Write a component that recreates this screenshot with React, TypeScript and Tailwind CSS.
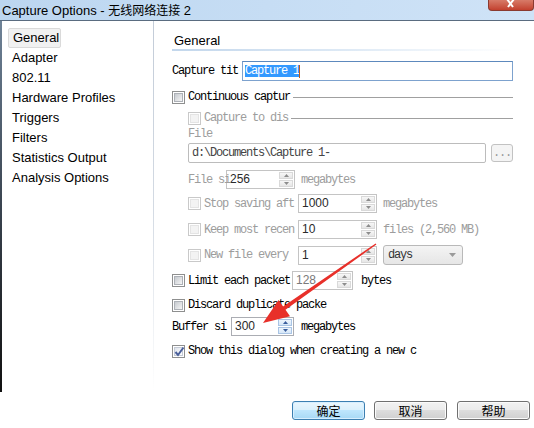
import React from 'react';

const MONO = "font-['Liberation_Mono',monospace] text-[12px] tracking-[-1.2px] leading-[12px] whitespace-nowrap";
const SANS = "font-['Liberation_Sans',Arial,sans-serif]";
const CJK = "font-['Noto_Sans_CJK_SC',sans-serif]";

const NAV = ['General', 'Adapter', '802.11', 'Hardware Profiles', 'Triggers', 'Filters', 'Statistics Output', 'Analysis Options'];

function CheckBox({ checked = false, disabled = false }: { checked?: boolean; disabled?: boolean }) {
  return (
    <div className={`w-[13px] h-[13px] shrink-0 border ${disabled ? 'border-[#c9c9c9]' : 'border-[#8e8f8f]'} bg-white p-[1px]`}>
      {checked ? (
        <div className="relative w-full h-full border border-[#c5cbd6] bg-gradient-to-br from-[#dfe4ec] to-white">
          <svg className="absolute -left-[1px] -top-[2px]" width="11" height="11" viewBox="0 0 11 11">
            <path d="M1.5 6 L4 9 L9.5 1.5" stroke="#4a5f9a" strokeWidth="2" fill="none" />
          </svg>
        </div>
      ) : (
        <div
          className={`w-full h-full border ${
            disabled ? 'border-[#e4e4e4] bg-[#f3f3f3]' : 'border-[#adb1b7] bg-gradient-to-br from-[#c6cacf] to-[#f5f5f5]'
          }`}
        />
      )}
    </div>
  );
}

function Tri({ up, color }: { up: boolean; color: string }) {
  return (
    <svg width="5" height="3" viewBox="0 0 5 3">
      <path d={up ? 'M0 3 L2.5 0 L5 3 Z' : 'M0 0 L2.5 3 L5 0 Z'} fill={color} />
    </svg>
  );
}

function Spin({
  value,
  className,
  disabled = false,
  hot = false,
  muted = false,
}: {
  value: string;
  className: string;
  disabled?: boolean;
  hot?: boolean;
  muted?: boolean;
}) {
  const half = hot
    ? 'border-[#a9c4e4] bg-gradient-to-b from-[#eef5fc] to-[#d6e7f8]'
    : 'border-[#d9d9d9] bg-gradient-to-b from-[#f7f7f7] to-[#e6e6e6]';
  const tri = hot ? '#3a5d9c' : '#8c8c8c';
  return (
    <div className={`flex h-[19px] shrink-0 border ${disabled ? 'border-[#c4c4c4]' : 'border-[#abadb3]'} bg-white ${className}`}>
      <div className={`flex-1 pl-[3px] text-[12px] leading-[17px] ${SANS} ${muted ? 'text-[#7a7a7a]' : 'text-[#2a2a2a]'}`}>{value}</div>
      <div className="flex w-[16px] flex-col gap-px p-px">
        <div className={`flex flex-1 items-center justify-center border ${half}`}>
          <Tri up color={tri} />
        </div>
        <div className={`flex flex-1 items-center justify-center border ${half}`}>
          <Tri up={false} color={tri} />
        </div>
      </div>
    </div>
  );
}

function Label({ text, className = '', grey = false }: { text: string; className?: string; grey?: boolean }) {
  return <div className={`${MONO} shrink-0 ${grey ? 'text-[#9d9d9d]' : 'text-black'} ${className}`}>{text}</div>;
}

function WinButton({ text, primary = false }: { text: string; primary?: boolean }) {
  return (
    <div
      className={`flex h-[19px] w-[73px] items-center justify-center rounded-[3px] border text-[12px] text-black ${CJK} ${
        primary
          ? 'border-[#3c7fb1] bg-[linear-gradient(#eaf6fd,#d9f0fc_50%,#bee6fd_50%,#a7d9f5)] shadow-[inset_0_0_0_1px_#d7efff]'
          : 'border-[#707070] bg-[linear-gradient(#f2f2f2,#ebebeb_50%,#dddddd_50%,#cfcfcf)] shadow-[inset_0_0_0_1px_#fbfbfb]'
      }`}
    >
      {text}
    </div>
  );
}

export default function App() {
  return (
    <div className="relative flex h-[428px] w-[534px] flex-col overflow-hidden bg-white">
      {/* title bar */}
      <div className="flex h-[20px] shrink-0 items-start justify-between bg-gradient-to-r from-[#bcd6f0] via-[#c6ddf4] to-[#cfe3f7]">
        <div className={`pl-[2px] pt-[1px] text-[13px] leading-[18px] text-black ${SANS}`}>
          Capture Options - <span className={`text-[12px] ${CJK}`}>无线网络连接</span> 2
        </div>
        <div className="flex h-[11px] w-[46px] items-start justify-center rounded-b-[4px] border-x border-b border-[#8a3a30] bg-gradient-to-b from-[#d77a68] to-[#c2402e]">
          <svg width="10" height="8" viewBox="0 0 10 8">
            <path d="M1 -1 L7 7 M8 -1 L2 7" stroke="white" strokeWidth="2" />
          </svg>
        </div>
      </div>
      <div className="h-px shrink-0 bg-[#5a6c80]" />

      {/* body */}
      <div className="flex h-[371px] shrink-0">
        <div className="w-[2px] shrink-0 bg-gradient-to-b from-[#6f8398] via-[#3a4450] to-[#111]" />
        <div className={`w-[151px] shrink-0 pt-[7px] ${SANS} text-[13px] text-black`}>
          {NAV.map((item, i) => (
            <div
              key={item}
              className={`ml-[6px] flex h-[20px] items-center pl-[4px] ${
                i === 0 ? 'w-[53px] rounded-[2px] border border-[#dadada] bg-[#f1f1f1] pl-[3px]' : ''
              }`}
            >
              {item}
            </div>
          ))}
        </div>
        <div className="w-px shrink-0 bg-gradient-to-b from-[#c3ccd8] via-[#d3dae3] to-white" />

        {/* panel */}
        <div className="flex flex-1 flex-col pl-[18px] pr-[21px]">
          <div className={`mt-[12px] h-[16px] pl-[2px] text-[13px] leading-[16px] text-black ${SANS}`}>General</div>
          <div className="h-[2px] bg-gradient-to-r from-[#c3d7ec] via-[#dde9f5] to-white" />

          <div className="mt-[10px] flex h-[20px] items-center">
            <Label text="Capture tit" className="w-[70px]" />
            <div className="flex h-[20px] flex-1 items-center border border-[#7da2ce] border-t-[#5d89bd] bg-white pl-[2px]">
              <span className={`${MONO} bg-[#3399ff] text-white`}>Capture 1</span>
              <span className="h-[13px] w-px bg-[#c05a1a]" />
            </div>
          </div>

          <div className="mt-[9px] flex h-[14px] items-center gap-[3px]">
            <CheckBox />
            <Label text="Continuous captur" />
            <div className="h-px flex-1 bg-[#a0a0a0]" />
          </div>

          <div className="mt-[7px] flex h-[14px] items-center gap-[3px] pl-[16px]">
            <CheckBox disabled />
            <Label text="Capture to dis" grey />
            <div className="h-px flex-1 bg-[#a0a0a0]" />
          </div>

          <div className="mt-[3px] flex h-[12px] items-center pl-[16px]">
            <Label text="File" grey />
          </div>

          <div className="mt-[3px] flex h-[20px] items-center pl-[16px]">
            <div className="flex h-[20px] w-[298px] items-center rounded-[2px] border border-[#bcbcbc] bg-white pl-[3px]">
              <span className={`${MONO} text-[#444]`}>d:\Documents\Capture 1-</span>
            </div>
            <div className="ml-[5px] flex h-[18px] w-[22px] items-center justify-center rounded-[3px] border border-[#c2c2c2] bg-[#f4f4f4]">
              <span className={`${MONO} text-[#9a9a9a]`}>...</span>
            </div>
          </div>

          <div className="mt-[7px] flex h-[19px] items-center pl-[16px]">
            <div className="relative z-10 w-[38px] shrink-0">
              <Label text="File si" grey />
            </div>
            <Spin value="256" className="w-[69px]" disabled />
            <Label text="megabytes" className="ml-[6px]" grey />
          </div>

          <div className="mt-[5px] flex h-[19px] items-center pl-[16px]">
            <CheckBox disabled />
            <Label text="Stop saving aft" className="ml-[3px] w-[94px]" grey />
            <Spin value="1000" className="w-[79px]" disabled />
            <Label text="megabytes" className="ml-[6px]" grey />
          </div>

          <div className="mt-[7px] flex h-[19px] items-center pl-[16px]">
            <CheckBox disabled />
            <Label text="Keep most recen" className="ml-[3px] w-[94px]" grey />
            <Spin value="10" className="w-[79px]" disabled />
            <Label text="files (2,560 MB)" className="ml-[6px]" grey />
          </div>

          <div className="mt-[6px] flex h-[20px] items-center pl-[16px]">
            <CheckBox disabled />
            <Label text="New file every" className="ml-[3px] w-[94px]" grey />
            <Spin value="1" className="w-[79px]" disabled />
            <div className="ml-[6px] flex h-[20px] w-[80px] items-center justify-between rounded-[3px] border border-[#b9b9b9] bg-gradient-to-b from-[#f4f4f4] to-[#e6e6e6] pl-[4px] pr-[6px]">
              <span className={`${MONO} text-[#333]`}>days</span>
              <svg width="7" height="4" viewBox="0 0 7 4">
                <path d="M0 0 L3.5 4 L7 0 Z" fill="#9a9a9a" />
              </svg>
            </div>
          </div>

          <div className="mt-[6px] flex h-[19px] items-center">
            <CheckBox />
            <Label text="Limit each packet" className="ml-[3px] w-[104px]" />
            <Spin value="128" className="w-[61px]" disabled muted />
            <Label text="bytes" className="ml-[8px]" />
          </div>

          <div className="mt-[8px] flex h-[14px] items-center">
            <CheckBox />
            <Label text="Discard duplicate packe" className="ml-[3px]" />
          </div>

          <div className="mt-[5px] flex h-[19px] items-center">
            <Label text="Buffer si" className="w-[59px]" />
            <Spin value="300" className="w-[63px]" hot />
            <Label text="megabytes" className="ml-[7px]" />
          </div>

          <div className="mt-[8px] flex h-[14px] items-center">
            <CheckBox checked />
            <Label text="Show this dialog when creating a new c" className="ml-[3px]" />
          </div>
        </div>
      </div>

      {/* buttons */}
      <div className="mt-[9px] flex gap-[8px] pl-[292px]">
        <WinButton text="确定" primary />
        <div className="ml-[1px]">
          <WinButton text="取消" />
        </div>
        <div className="ml-[2px]">
          <WinButton text="帮助" />
        </div>
      </div>

      {/* red annotation arrow */}
      <svg className="pointer-events-none absolute left-0 top-0" width="534" height="428" viewBox="0 0 534 428">
        <polygon
          points="375.6,243.4 283.1,306.5 278.6,299.9 263,323 290,316.3 285.5,309.7 376.4,244.6"
          fill="#e8302a"
        />
      </svg>
    </div>
  );
}
